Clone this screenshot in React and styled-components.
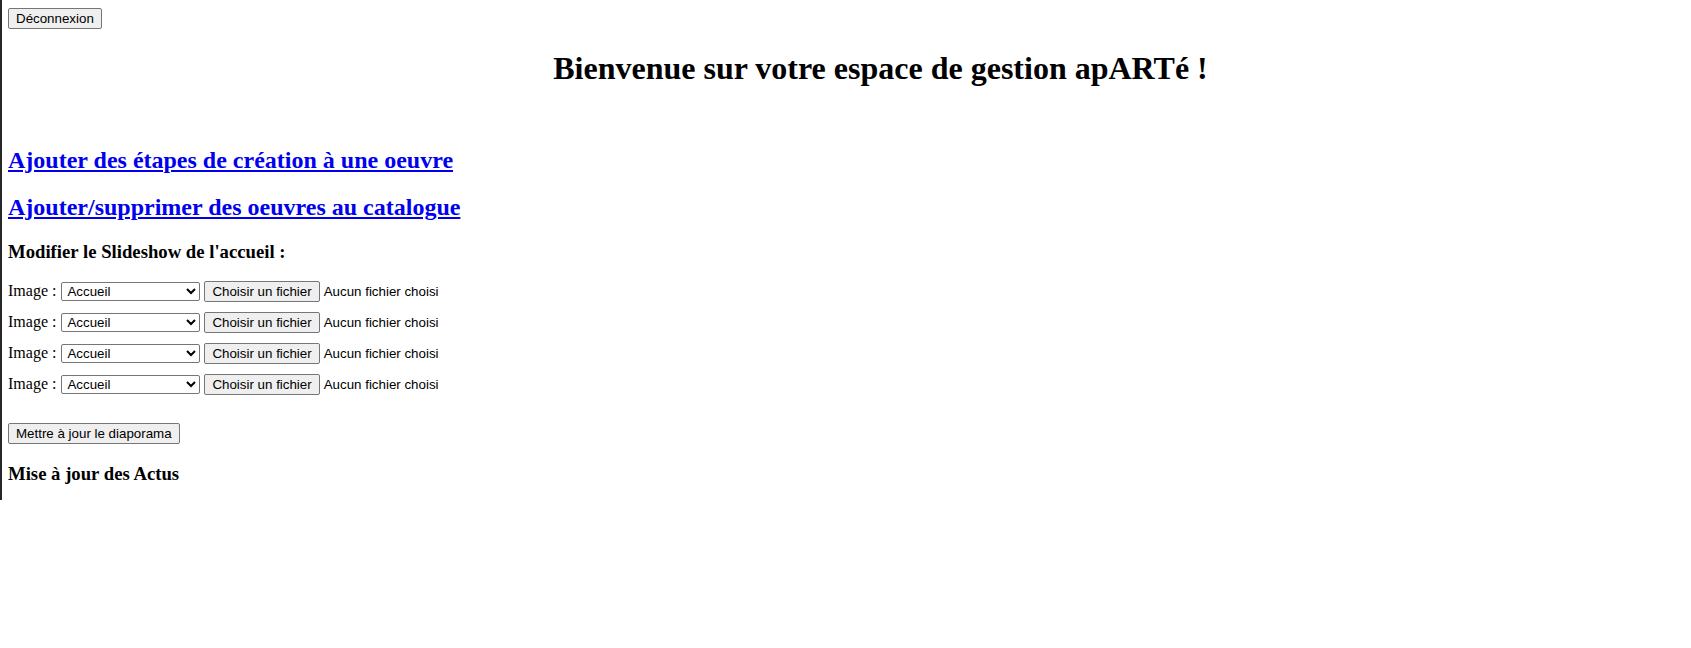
import React from "react";
import styled, { createGlobalStyle } from "styled-components";

const Global = createGlobalStyle`
  html, body { margin: 0; padding: 0; background: #fff; }
  body { font-family: "Liberation Serif", "Times New Roman", serif; font-size: 16px; color: #000; }
`;

const Page = styled.div`
  box-sizing: border-box;
  height: 500px;
  border-left: 2px solid #262626;
  padding: 8px 8px 0 6px;
`;

const NativeButton = styled.button`
  font-family: "Liberation Sans", Arial, sans-serif;
  font-size: 13.333px;
  color: #000;
  background: #efefef;
  border: 1px solid #767676;
  border-radius: 2px;
  padding: 2px 7px;
  line-height: normal;
  margin: 0;
`;

const Title = styled.h1`
  font-size: 32px;
  font-weight: bold;
  text-align: center;
  margin: 21px 0 21px;
  padding-left: 70px;
`;

const Spacer = styled.div`
  height: 39px;
`;

const LinkHeading = styled.h2`
  font-size: 24px;
  font-weight: bold;
  margin: 0 0 20px;
  a { color: #0000ee; text-decoration: underline; }
`;

const SectionHeading = styled.h3`
  font-size: 18.72px;
  font-weight: bold;
  margin: 0 0 ${(p) => p.$after}px;
`;

const Rows = styled.div`
  display: flex;
  flex-direction: column;
  gap: 9px;
`;

const Row = styled.div`
  display: flex;
  align-items: center;
  height: 22px;
  font-size: 16px;
  white-space: pre;
`;

const Select = styled.select`
  font-family: "Liberation Sans", Arial, sans-serif;
  font-size: 13.333px;
  width: 139px;
  height: 19px;
  margin: 0 4px 0 5px;
  border: 1px solid #767676;
  border-radius: 2px;
  background: #fff;
  color: #000;
  padding: 0 0 0 1px;
`;

const FileName = styled.span`
  font-family: "Liberation Sans", Arial, sans-serif;
  font-size: 13.333px;
  margin-left: 4px;
`;

const SubmitWrap = styled.div`
  margin: 28px 0 19px;
`;

export default function App() {
  const rows = [0, 1, 2, 3];
  return (
    <>
      <Global />
      <Page>
        <NativeButton>Déconnexion</NativeButton>
        <Title>Bienvenue sur votre espace de gestion apARTé !</Title>
        <Spacer />
        <LinkHeading><a href="#">Ajouter des étapes de création à une oeuvre</a></LinkHeading>
        <LinkHeading><a href="#">Ajouter/supprimer des oeuvres au catalogue</a></LinkHeading>
        <SectionHeading $after={17}>Modifier le Slideshow de l'accueil :</SectionHeading>
        <Rows>
          {rows.map((r) => (
            <Row key={r}>
              Image :
              <Select defaultValue="Accueil">
                <option>Accueil</option>
              </Select>
              <NativeButton>Choisir un fichier</NativeButton>
              <FileName>Aucun fichier choisi</FileName>
            </Row>
          ))}
        </Rows>
        <SubmitWrap>
          <NativeButton>Mettre à jour le diaporama</NativeButton>
        </SubmitWrap>
        <SectionHeading $after={19}>Mise à jour des Actus</SectionHeading>
      </Page>
    </>
  );
}
